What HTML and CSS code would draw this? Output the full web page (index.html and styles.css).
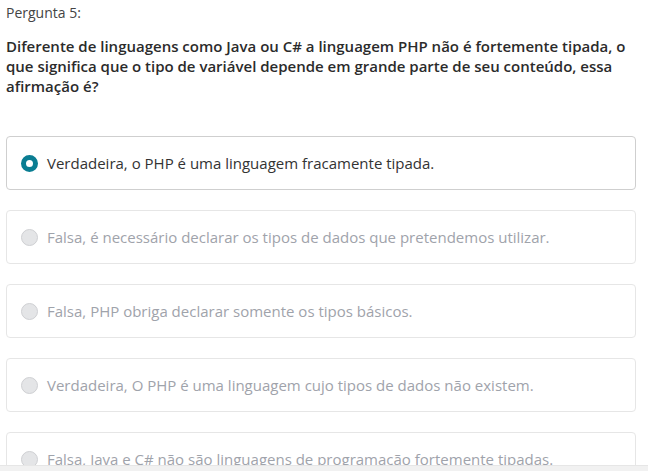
FILE: index.html
```html
<!DOCTYPE html>
<html lang="pt">
<head>
<meta charset="utf-8">
<link rel="stylesheet" href="styles.css">
</head>
<body>
<div class="page">
  <div class="label">Pergunta 5:</div>
  <p class="question">Diferente de linguagens como Java ou C# a linguagem PHP não é fortemente tipada, o que significa que o tipo de variável depende em grande parte de seu conteúdo, essa afirmação é?</p>
  <div class="options">
    <div class="option selected"><span class="radio"></span><span class="text">Verdadeira, o PHP é uma linguagem fracamente tipada.</span></div>
    <div class="option"><span class="radio"></span><span class="text">Falsa, é necessário declarar os tipos de dados que pretendemos utilizar.</span></div>
    <div class="option"><span class="radio"></span><span class="text">Falsa, PHP obriga declarar somente os tipos básicos.</span></div>
    <div class="option"><span class="radio"></span><span class="text">Verdadeira, O PHP é uma linguagem cujo tipos de dados não existem.</span></div>
    <div class="option"><span class="radio"></span><span class="text">Falsa, Java e C# não são linguagens de programação fortemente tipadas.</span></div>
  </div>
</div>
<div class="bottombar"></div>
</body>
</html>
```
FILE: styles.css
```css
html, body {
  margin: 0;
  padding: 0;
  height: 100%;
  overflow: hidden;
  background: #fff;
}
body {
  font-family: "Open Sans", "Liberation Sans", sans-serif;
  color: #333;
  position: relative;
}
.page {
  padding: 3px 12px 0 6px;
}
.label {
  font-size: 14px;
  line-height: 20px;
  color: #444;
}
.question {
  margin: 13px 0 0 0;
  font-size: 15px;
  line-height: 20px;
  font-weight: 600;
  color: #2b2b2b;
}
.options {
  margin-top: 40px;
  display: flex;
  flex-direction: column;
  gap: 20px;
}
.option {
  display: flex;
  align-items: center;
  height: 52px;
  border: 1px solid #e6e6e6;
  border-radius: 4px;
  padding-left: 14px;
  font-size: 15px;
  color: #9fa3ab;
}
.option.selected {
  border-color: #cfcfcf;
  color: #333;
}
.radio {
  width: 17px;
  height: 17px;
  box-sizing: border-box;
  border-radius: 50%;
  background: #e4e5e7;
  border: 1px solid #cfd0d3;
  margin-right: 9px;
  flex: none;
}
.option.selected .radio {
  background: #fff;
  border: 5px solid #0a7d92;
}
.bottombar {
  position: absolute;
  left: 0;
  right: 0;
  bottom: 0;
  height: 5px;
  background: #f1f1f1;
  border-top: 1px solid #e6e6e6;
}
```
